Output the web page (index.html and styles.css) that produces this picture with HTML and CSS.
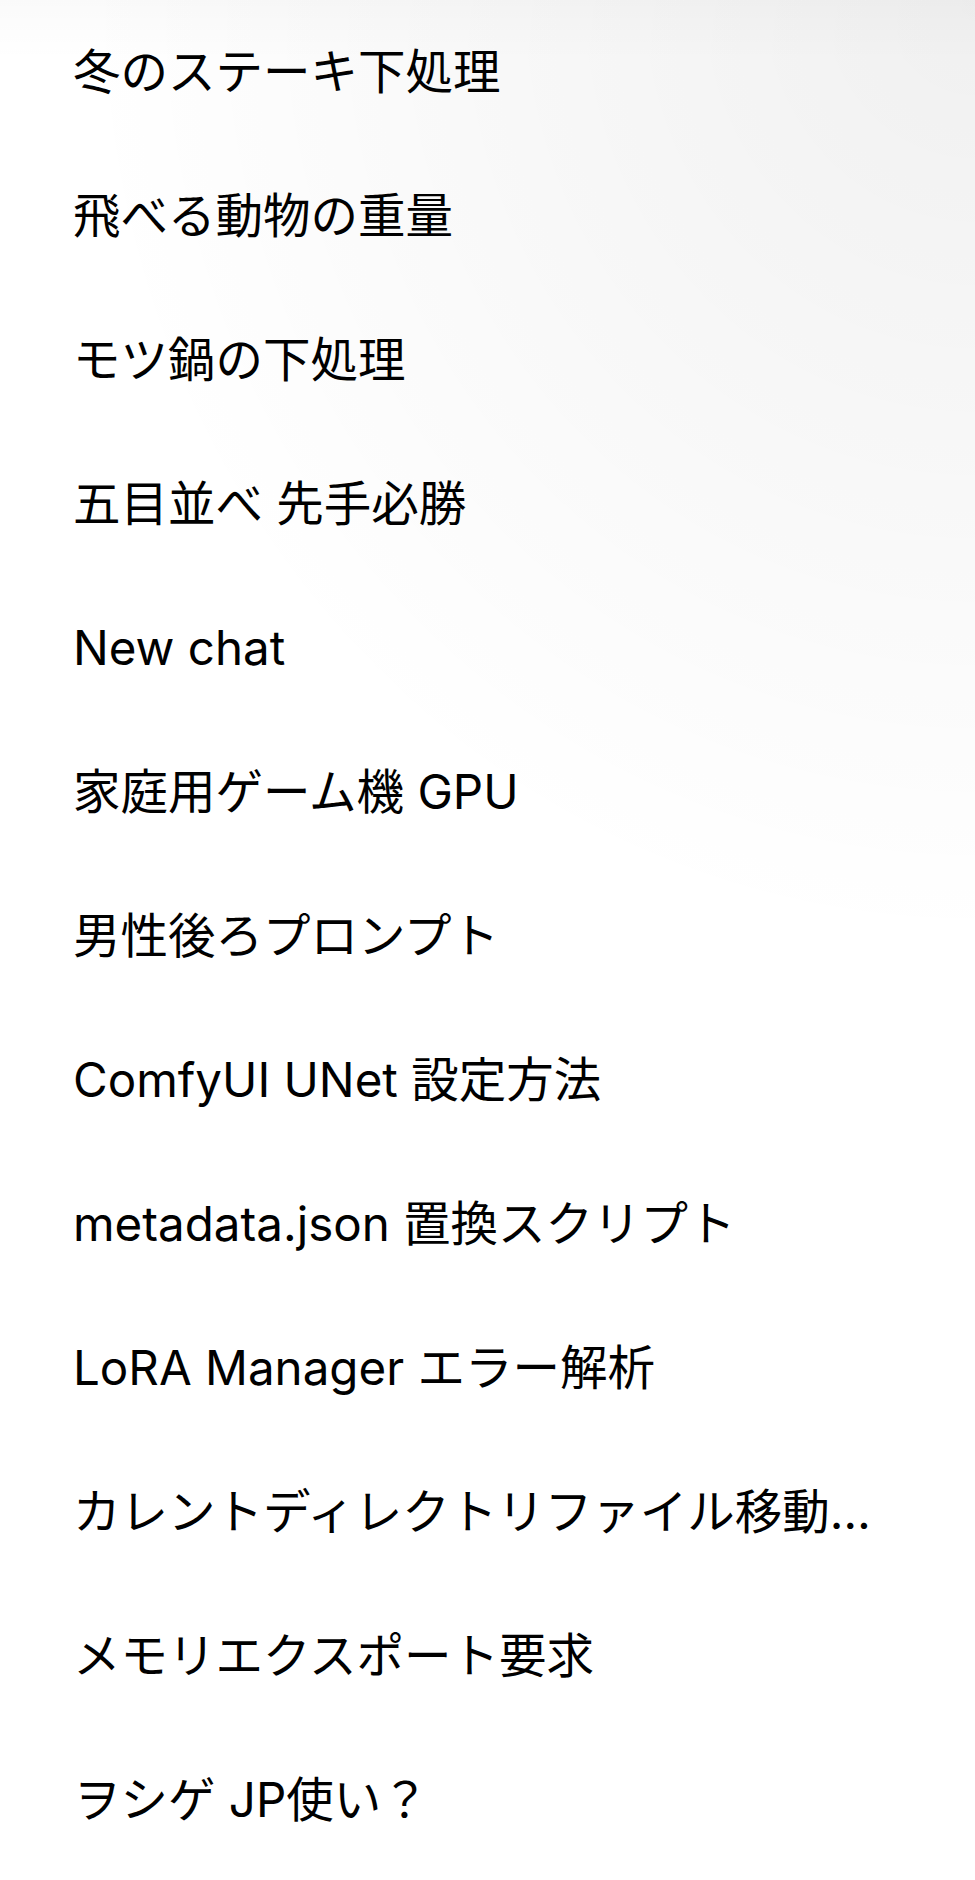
FILE: index.html
```html
<!DOCTYPE html>
<html lang="ja">
<head>
    <meta charset="UTF-8">
    <meta name="viewport" content="width=device-width, initial-scale=1.0">
    <title>Chats</title>
    <link rel="stylesheet" href="styles.css">
</head>
<body>
    <div class="drawer">
        <ul class="chat-list">
            <li class="chat-item">冬のステーキ下処理</li>
            <li class="chat-item">飛べる動物の重量</li>
            <li class="chat-item">モツ鍋の下処理</li>
            <li class="chat-item">五目並べ 先手必勝</li>
            <li class="chat-item">New chat</li>
            <li class="chat-item">家庭用ゲーム機 GPU</li>
            <li class="chat-item">男性後ろプロンプト</li>
            <li class="chat-item">ComfyUI UNet 設定方法</li>
            <li class="chat-item">metadata.json 置換スクリプト</li>
            <li class="chat-item">LoRA Manager エラー解析</li>
            <li class="chat-item">カレントディレクトリファイル移動方法</li>
            <li class="chat-item">メモリエクスポート要求</li>
            <li class="chat-item">ヲシゲ JP使い？</li>
        </ul>
    </div>
</body>
</html>
```

FILE: styles.css
```css
body {
    margin: 0;
    font-family: Inter, "Noto Sans CJK JP", sans-serif;
    color: #000;
    background-color: #fff;
}
.drawer {
    min-height: 100vh;
    background:
        radial-gradient(ellipse 900px 950px at 100% 0, rgba(0, 0, 0, 0.06), rgba(0, 0, 0, 0) 100%),
        linear-gradient(to bottom, rgba(0, 0, 0, 0.02), rgba(0, 0, 0, 0) 60px),
        #fff;
}
.chat-list {
    list-style: none;
    margin: 0;
    padding: 0;
}
.chat-item {
    height: 144px;
    line-height: 144px;
    padding: 0 60px 0 73px;
    font-size: 47.5px;
    white-space: nowrap;
    overflow: hidden;
    text-overflow: ellipsis;
}
```
